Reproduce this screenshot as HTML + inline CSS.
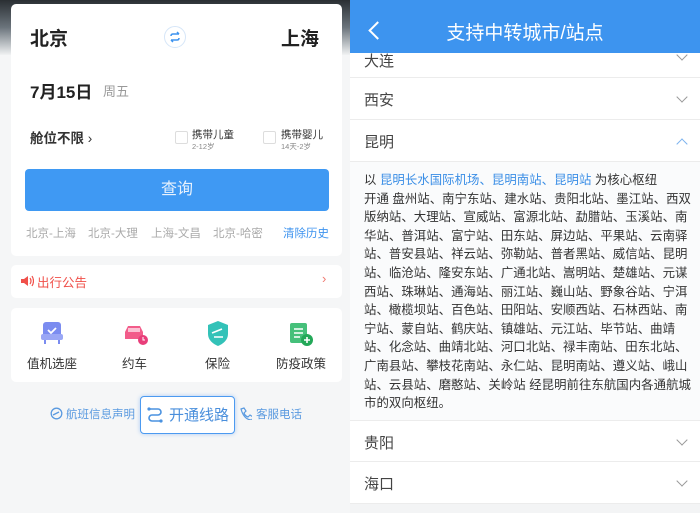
<!DOCTYPE html><html><head><meta charset="utf-8"><style>
*{margin:0;padding:0;box-sizing:border-box}
body{width:700px;height:513px;overflow:hidden;position:relative;font-family:"Liberation Sans","Noto Sans CJK SC",sans-serif;background:#fff}
.a{position:absolute;white-space:nowrap}
#L{position:absolute;left:0;top:0;width:350px;height:513px;background:#f5f6f7;overflow:hidden}
#R{position:absolute;left:350px;top:0;width:350px;height:513px;background:#fff;overflow:hidden}
.card{position:absolute;background:#fff;border-radius:5px}
.row{position:absolute;left:0;width:350px;border-bottom:1px solid #ececec;background:#fff}
.row span{position:absolute;left:14px;font-size:15px;color:#444}
.chev{position:absolute;right:14px;width:8px;height:8px;border-right:1.2px solid #999;border-bottom:1.2px solid #999;transform:rotate(45deg)}
.txt{position:absolute;left:14px;top:171px;font-size:12.4px;line-height:18.6px;color:#333;white-space:nowrap;letter-spacing:.05px}
.b{color:#3a8ee6}
.h{font-size:11.5px;color:#aaa;top:225px}
</style></head><body>
<div id="L">
 <div class="a" style="left:0;top:0;width:350px;height:55px;background:linear-gradient(#2a2f33,#6b747c 50%,#f0f2f3)"></div>
 <div class="card" style="left:11px;top:4px;width:331px;height:252px"></div>
 <div class="a" style="left:30px;top:24px;font-size:19px;font-weight:bold;color:#222">北京</div>
 <div class="a" style="left:164px;top:26px;width:22px;height:22px;border-radius:50%;border:1px solid #d6e6f8;background:#fff"></div>
 <svg class="a" style="left:168px;top:30px" width="14" height="14" viewBox="0 0 14 14"><path d="M3 6 Q3 4 5 4 H11 M9 2 L11 4 M11 8 Q11 10 9 10 H3 M5 12 L3 10" fill="none" stroke="#3d93ef" stroke-width="1.5"/></svg>
 <div class="a" style="left:281px;top:24px;font-size:19px;font-weight:bold;color:#222">上海</div>
 <div class="a" style="left:30px;top:78px;font-size:17px;font-weight:bold;color:#222">7月15日</div>
 <div class="a" style="left:103px;top:81px;font-size:13px;color:#999">周五</div>
 <div class="a" style="left:30px;top:127px;font-size:13.5px;color:#333;font-weight:bold">舱位不限 <span style="font-weight:normal">›</span></div>
 <div class="a" style="left:175px;top:131px;width:13px;height:13px;border:1px solid #ddd;border-radius:2px"></div>
 <div class="a" style="left:192px;top:127px;font-size:10.5px;color:#333">携带儿童</div>
 <div class="a" style="left:192px;top:141px;font-size:7.5px;color:#888">2-12岁</div>
 <div class="a" style="left:263px;top:131px;width:13px;height:13px;border:1px solid #ddd;border-radius:2px"></div>
 <div class="a" style="left:281px;top:127px;font-size:10.5px;color:#333">携带婴儿</div>
 <div class="a" style="left:281px;top:141px;font-size:7.5px;color:#888">14天-2岁</div>
 <div class="a" style="left:25px;top:169px;width:304px;height:42px;background:#3f99f3;border-radius:4px;color:#e8f2fd;font-size:16px;text-align:center;line-height:42px">查询</div>
 <div class="a h" style="left:26px">北京-上海</div>
 <div class="a h" style="left:88px">北京-大理</div>
 <div class="a h" style="left:151px">上海-文昌</div>
 <div class="a h" style="left:213px">北京-哈密</div>
 <div class="a" style="left:283px;top:225px;font-size:11.5px;color:#3d93ef">清除历史</div>
 <div class="card" style="left:11px;top:265px;width:331px;height:33px"></div>
 <svg class="a" style="left:20px;top:275px" width="14" height="12"><path d="M1 4h3l4-3v10L4 8H1z" fill="#f0504a"/><path d="M10 3q2 3 0 6M12 1q3 5 0 10" stroke="#f0504a" fill="none" stroke-width="1.2"/></svg>
 <div class="a" style="left:37px;top:272px;font-size:12.5px;color:#f0504a">出行公告</div>
 <div class="a" style="left:322px;top:271px;font-size:13px;color:#f07a70">›</div>
 <div class="card" style="left:11px;top:308px;width:331px;height:74px"></div>
 <svg class="a" style="left:40px;top:320px" width="24" height="26"><rect x="3" y="2" width="18" height="16" rx="3" fill="#7b8cf0"/><rect x="1" y="14" width="22" height="6" rx="2" fill="#9aa7f5"/><path d="M8 10l3 3 5-5" stroke="#fff" stroke-width="1.8" fill="none"/><path d="M5 20v4M19 20v4" stroke="#7b8cf0" stroke-width="2"/></svg>
 <div class="a" style="left:27px;top:353px;font-size:12.5px;color:#333">值机选座</div>
 <svg class="a" style="left:122px;top:322px" width="28" height="24"><path d="M3 10l3-6h12l3 6v7H3z" fill="#f25c8a"/><rect x="6" y="6" width="12" height="4" fill="#fbc2d4"/><circle cx="21" cy="18" r="5" fill="#e83e7a"/><path d="M21 15v3h2" stroke="#fff" fill="none"/></svg>
 <div class="a" style="left:122px;top:353px;font-size:12.5px;color:#333">约车</div>
 <svg class="a" style="left:206px;top:320px" width="24" height="28"><path d="M12 1l10 4v9c0 6-5 10-10 12C7 24 2 20 2 14V5z" fill="#33c2b8"/><path d="M6 13l10-4M8 17h9" stroke="#fff" stroke-width="1.6"/></svg>
 <div class="a" style="left:205px;top:353px;font-size:12.5px;color:#333">保险</div>
 <svg class="a" style="left:288px;top:321px" width="26" height="26"><rect x="2" y="2" width="17" height="20" rx="2" fill="#45c07a"/><path d="M6 8h9M6 12h9M6 16h6" stroke="#fff" stroke-width="1.4"/><circle cx="19" cy="19" r="6" fill="#23a858"/><path d="M19 16v6M16 19h6" stroke="#fff" stroke-width="1.6"/></svg>
 <div class="a" style="left:276px;top:353px;font-size:12.5px;color:#333">防疫政策</div>
 <svg class="a" style="left:50px;top:407px" width="13" height="13"><circle cx="6.5" cy="6.5" r="5.3" fill="none" stroke="#5a9ae0" stroke-width="1.3"/><path d="M3 8l6-3" stroke="#5a9ae0" stroke-width="1.3"/></svg>
 <div class="a" style="left:66px;top:406px;font-size:11.5px;color:#5a9ae0">航班信息声明</div>
 <div class="a" style="left:140px;top:396px;width:95px;height:38px;border:1.5px solid #4c9af0;border-radius:4px;background:#fff;box-shadow:0 0 4px rgba(60,140,240,.4)"></div>
 <svg class="a" style="left:146px;top:405px" width="18" height="18"><path d="M3 4h9a3 3 0 010 6H6a3 3 0 000 6h9" fill="none" stroke="#4a92e0" stroke-width="1.6"/><circle cx="3" cy="4" r="1.6" fill="#4a92e0"/><circle cx="15" cy="16" r="1.6" fill="#4a92e0"/></svg>
 <div class="a" style="left:169px;top:404px;font-size:15px;color:#4a8fdc">开通线路</div>
 <svg class="a" style="left:239px;top:407px" width="13" height="13"><path d="M2 2l3-1 2 3-2 2q1 3 4 4l2-2 3 2-1 3Q5 13 2 2z" fill="none" stroke="#5a9ae0" stroke-width="1.2"/></svg>
 <div class="a" style="left:256px;top:406px;font-size:11.5px;color:#5a9ae0">客服电话</div>
</div>
<div id="R">
 <div class="row" style="top:40px;height:38px"><span style="top:10px">大连</span><i class="chev" style="top:11px"></i></div>
 <div class="row" style="top:78px;height:42px"><span style="top:11px">西安</span><i class="chev" style="top:15px"></i></div>
 <div class="row" style="top:120px;height:42px"><span style="top:11px">昆明</span><i class="chev" style="top:20px;transform:rotate(225deg);border-color:#7bb2ee"></i></div>
 <div class="a" style="left:0;top:162px;width:350px;height:258px;background:#fafbfc"></div>
 <div class="txt">以 <span class="b">昆明长水国际机场、昆明南站、昆明站</span> 为核心枢纽<br>开通 盘州站、南宁东站、建水站、贵阳北站、墨江站、西双<br>版纳站、大理站、宣威站、富源北站、勐腊站、玉溪站、南<br>华站、普洱站、富宁站、田东站、屏边站、平果站、云南驿<br>站、普安县站、祥云站、弥勒站、普者黑站、威信站、昆明<br>站、临沧站、隆安东站、广通北站、嵩明站、楚雄站、元谋<br>西站、珠琳站、通海站、丽江站、巍山站、野象谷站、宁洱<br>站、橄榄坝站、百色站、田阳站、安顺西站、石林西站、南<br>宁站、蒙自站、鹤庆站、镇雄站、元江站、毕节站、曲靖<br>站、化念站、曲靖北站、河口北站、禄丰南站、田东北站、<br>广南县站、攀枝花南站、永仁站、昆明南站、遵义站、峨山<br>站、云县站、磨憨站、关岭站 经昆明前往东航国内各通航城<br>市的双向枢纽。</div>
 <div class="row" style="top:420px;height:42px;border-top:1px solid #ececec"><span style="top:11px">贵阳</span><i class="chev" style="top:15px"></i></div>
 <div class="row" style="top:462px;height:42px"><span style="top:11px">海口</span><i class="chev" style="top:15px"></i></div>
 <div class="a" style="left:0;top:504px;width:350px;height:9px;background:#f3f4f5"></div>
 <div class="a" style="left:0;top:0;width:350px;height:53px;background:#3d94ef"></div>
 <div class="a" style="left:21px;top:24px;width:13px;height:13px;border-left:2px solid #fff;border-bottom:2px solid #fff;transform:rotate(45deg)"></div>
 <div class="a" style="left:0;top:18px;width:350px;text-align:center;font-size:19px;color:#fff">支持中转城市/站点</div>
</div>
</body></html>
